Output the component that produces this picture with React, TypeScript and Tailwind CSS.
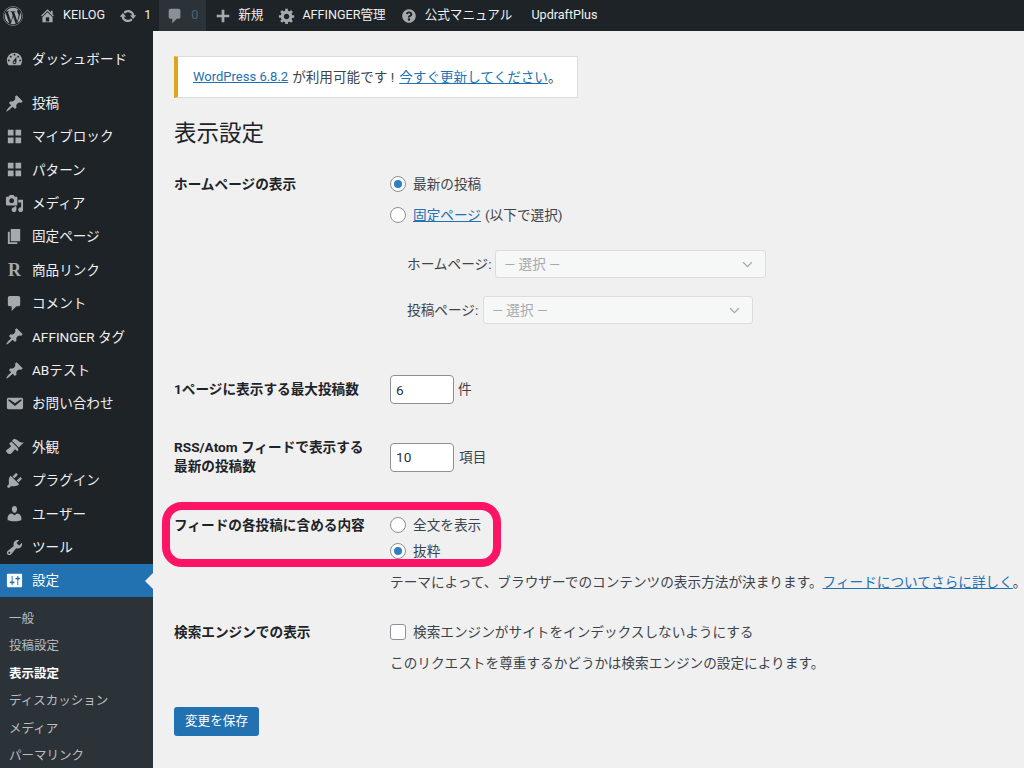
import { ReactNode } from "react";
import { FaWordpress, FaQuestionCircle } from "react-icons/fa";

const P = ({ d, className = "" }: { d: string; className?: string }) => (
  <svg viewBox="0 0 20 20" fill="currentColor" className={className}>
    <path d={d} />
  </svg>
);

const icons: Record<string, string> = {
  dashboard:
    "M3.76 16h12.48c1.1-1.37 1.76-3.11 1.76-5 0-4.42-3.58-8-8-8s-8 3.58-8 8c0 1.89.66 3.63 1.76 5zM10 4c.55 0 1 .45 1 1s-.45 1-1 1-1-.45-1-1 .45-1 1-1zM6 6c.55 0 1 .45 1 1s-.45 1-1 1-1-.45-1-1 .45-1 1-1zm8 0c.55 0 1 .45 1 1s-.45 1-1 1-1-.45-1-1 .45-1 1-1zm-5.37 5.55L12 7v6c0 1.1-.9 2-2 2s-2-.9-2-2c0-.57.24-1.08.63-1.45zM4 10c.55 0 1 .45 1 1s-.45 1-1 1-1-.45-1-1 .45-1 1-1zm12 0c.55 0 1 .45 1 1s-.45 1-1 1-1-.45-1-1 .45-1 1-1zm-5 3c0-.55-.45-1-1-1s-1 .45-1 1 .45 1 1 1 1-.45 1-1z",
  pin: "M10.44 3.02l1.82-1.82 6.36 6.35-1.83 1.82c-1.05-.68-2.48-.57-3.41.36l-.75.75c-.92.93-1.04 2.35-.35 3.41l-1.83 1.82-2.41-2.41-2.8 2.79c-.42.42-3.38 2.71-3.8 2.29s1.86-3.39 2.28-3.81l2.79-2.79L4.1 9.36l1.83-1.82c1.05.69 2.48.57 3.4-.36l.75-.75c.93-.92 1.05-2.35.36-3.41z",
  grid: "M3 3h6v6H3zM11 3h6v6h-6zM3 11h6v6H3zM11 11h6v6h-6z",
  media:
    "M13 11V4c0-.55-.45-1-1-1h-1.67L9 1H5L3.67 3H2c-.55 0-1 .45-1 1v7c0 .55.45 1 1 1h10c.55 0 1-.45 1-1zM7 4.5c1.38 0 2.5 1.12 2.5 2.5S8.38 9.5 7 9.5 4.5 8.38 4.5 7 5.62 4.5 7 4.5zM14 6h5v10.5c0 1.38-1.12 2.5-2.5 2.5S14 17.88 14 16.5s1.12-2.5 2.5-2.5c.17 0 .34.02.5.05V9h-3V6zm-4 8.05V13h2v3.5c0 1.38-1.12 2.5-2.5 2.5S7 17.88 7 16.5 8.12 14 9.5 14c.17 0 .34.02.5.05z",
  page: "M6 15V2h10v13H6zm-1 1h8v2H3V5h2v11z",
  comment:
    "M5 2h9c1.1 0 2 .9 2 2v7c0 1.1-.9 2-2 2h-2l-5 5v-5H5c-1.1 0-2-.9-2-2V4c0-1.1.9-2 2-2z",
  mail: "M3.87 4h13.25C18.37 4 19 4.59 19 5.79v8.42c0 1.19-.63 1.79-1.88 1.79H3.87c-1.25 0-1.88-.6-1.88-1.79V5.79c0-1.2.63-1.79 1.88-1.79zm6.62 8.6l6.74-5.53c.24-.2.43-.66.13-1.07-.29-.41-.82-.42-1.17-.17l-5.7 3.86L4.8 5.83c-.35-.25-.88-.24-1.17.17-.3.41-.11.87.13 1.07z",
  brush:
    "M14.48 11.06L7.41 3.99l1.5-1.5c.5-.56 2.3-.47 3.51.32 1.21.8 1.43 1.28 2.91 2.1 1.18.64 2.45 1.26 4.45.85zm-.71.71L6.7 4.7 4.93 6.47c-.39.39-.39 1.02 0 1.41l1.06 1.06c.39.39.39 1.03 0 1.42-.6.6-1.43 1.11-2.21 1.69-.35.26-.7.53-1.01.84C1.43 13.23.4 14.89 2.4 16.89s3.66.97 5.03-.23c.31-.31.58-.66.84-1.01.58-.78 1.09-1.61 1.69-2.21.39-.39 1.03-.39 1.42 0l1.06 1.06c.39.39 1.02.39 1.41 0z",
  plug: "M13.11 4.36L9.87 7.6 8 5.73l3.24-3.24c.35-.34 1.05-.2 1.56.32.52.51.66 1.21.31 1.55zm-8 1.77l.91-1.12 9.01 9.01-1.19.84c-.71.71-2.63 1.16-3.82 1.16H6.14L4.9 17.26c-.59.59-1.54.59-2.12 0-.59-.58-.59-1.53 0-2.12l1.24-1.24v-3.88c0-1.13.4-3.19 1.09-3.89zm7.26 3.97l3.24-3.24c.34-.35 1.04-.21 1.55.31.52.51.66 1.21.31 1.55l-3.24 3.25z",
  user: "M10 9.25c-2.27 0-2.73-3.44-2.73-3.44C7 4.02 7.82 2 9.97 2c2.16 0 2.98 2.02 2.71 3.81 0 0-.41 3.44-2.68 3.44zm0 2.57L12.72 10c2.39 0 4.52 2.33 4.52 4.53v2.49s-3.65 1.13-7.24 1.13c-3.65 0-7.24-1.13-7.24-1.13v-2.49c0-2.25 1.94-4.48 4.47-4.48z",
  wrench:
    "M16.68 9.77c-1.34 1.34-3.3 1.67-4.95.99l-5.41 6.52c-.99.99-2.59.99-3.58 0s-.99-2.59 0-3.57l6.52-5.42c-.68-1.65-.35-3.61.99-4.95 1.28-1.28 3.12-1.62 4.72-1.06l-2.89 2.89 2.82 2.82 2.86-2.87c.53 1.58.18 3.39-1.08 4.65zM3.81 16.21c.4.39 1.04.39 1.43 0 .4-.4.4-1.04 0-1.43-.39-.4-1.03-.4-1.43 0-.39.39-.39 1.03 0 1.43z",
  settings:
    "M18 16V4c0-.55-.45-1-1-1H3c-.55 0-1 .45-1 1v12c0 .55.45 1 1 1h14c.55 0 1-.45 1-1zM8 11h1c.55 0 1 .45 1 1s-.45 1-1 1H8v1.5c0 .28-.22.5-.5.5s-.5-.22-.5-.5V13H6c-.55 0-1-.45-1-1s.45-1 1-1h1V5.5c0-.28.22-.5.5-.5s.5.22.5.5V11zm5-2h-1c-.55 0-1-.45-1-1s.45-1 1-1h1V5.5c0-.28.22-.5.5-.5s.5.22.5.5V7h1c.55 0 1 .45 1 1s-.45 1-1 1h-1v5.5c0 .28-.22.5-.5.5s-.5-.22-.5-.5V9z",
  home: "M16 8.5l1.53 1.53-1.06 1.06L10 4.62l-6.47 6.47-1.06-1.06L10 2.5l4 4v-2h2v4zm-6-2.46l6 5.99V18H4v-5.97zM12 17v-5H8v5h4z",
  update:
    "M10.2 3.28c3.53 0 6.43 2.61 6.92 6h2.08l-3.5 4-3.5-4h2.32c-.45-1.97-2.21-3.45-4.32-3.45-1.45 0-2.73.71-3.54 1.78L4.95 5.66C6.23 4.2 8.11 3.28 10.2 3.28zm-.4 13.44c-3.52 0-6.43-2.61-6.92-6H.8l3.5-4c1.17 1.33 2.33 2.67 3.5 4H5.48c.45 1.97 2.21 3.45 4.32 3.45 1.45 0 2.73-.71 3.54-1.78l1.71 1.95c-1.28 1.46-3.15 2.38-5.25 2.38z",
  plus: "M17 8.5v3h-5.5V17h-3v-5.5H3v-3h5.5V3h3v5.5z",
  gear: "M18 12h-2.18c-.17.7-.44 1.35-.81 1.93l1.54 1.54-2.1 2.1-1.54-1.54c-.58.36-1.23.63-1.91.79V19H8v-2.18c-.68-.16-1.33-.43-1.91-.79l-1.54 1.54-2.12-2.12 1.54-1.54c-.36-.58-.63-1.23-.79-1.91H1V9.03h2.17c.16-.7.44-1.35.8-1.94L2.43 5.55l2.1-2.1 1.54 1.54c.58-.37 1.24-.64 1.93-.81V2h3v2.18c.68.16 1.33.43 1.91.79l1.54-1.54 2.12 2.12-1.54 1.54c.36.59.64 1.24.8 1.94H18V12zm-8.5 1.5c1.66 0 3-1.34 3-3s-1.34-3-3-3-3 1.34-3 3 1.34 3 3 3z",
};

const MenuItem = ({ icon, label, active }: { icon: string; label: string; active?: boolean }) => (
  <div className={`relative flex h-[33.4px] shrink-0 items-center pl-[5px] ${active ? "bg-[#2271b1] text-white" : "text-[#f0f0f1]"}`}>
    {icon === "R" ? (
      <span className="w-[19px] text-center font-['Liberation_Serif',serif] text-[18px] font-bold text-[#a7aaad]">R</span>
    ) : (
      <P d={icons[icon]} className={`h-[19px] w-[19px] ${active ? "text-white" : "text-[#a7aaad]"}`} />
    )}
    <span className="ml-2 text-[13.6px]">{label}</span>
    {active && (
      <span className="absolute right-0 top-[9px] h-0 w-0 border-y-[8px] border-r-[8px] border-y-transparent border-r-[#f0f0f1]" />
    )}
  </div>
);

const Sidebar = () => (
  <aside className="flex w-[153px] shrink-0 flex-col overflow-hidden bg-[#1d2327] pt-[11.4px]">
    <MenuItem icon="dashboard" label="ダッシュボード" />
    <div className="h-[10.6px] shrink-0" />
    <MenuItem icon="pin" label="投稿" />
    <MenuItem icon="grid" label="マイブロック" />
    <MenuItem icon="grid" label="パターン" />
    <MenuItem icon="media" label="メディア" />
    <MenuItem icon="page" label="固定ページ" />
    <MenuItem icon="R" label="商品リンク" />
    <MenuItem icon="comment" label="コメント" />
    <MenuItem icon="pin" label="AFFINGER タグ" />
    <MenuItem icon="pin" label="ABテスト" />
    <MenuItem icon="mail" label="お問い合わせ" />
    <div className="h-[10px] shrink-0" />
    <MenuItem icon="brush" label="外観" />
    <MenuItem icon="plug" label="プラグイン" />
    <MenuItem icon="user" label="ユーザー" />
    <MenuItem icon="wrench" label="ツール" />
    <MenuItem icon="settings" label="設定" active />
    <div className="flex flex-1 flex-col bg-[#2c3338] pl-[9px] pt-[8.5px] text-[12.5px] text-[#b9bcc0]">
      <div className="flex h-[27.4px] shrink-0 items-center">一般</div>
      <div className="flex h-[27.4px] shrink-0 items-center">投稿設定</div>
      <div className="flex h-[27.4px] shrink-0 items-center font-bold text-white">表示設定</div>
      <div className="flex h-[27.4px] shrink-0 items-center">ディスカッション</div>
      <div className="flex h-[27.4px] shrink-0 items-center">メディア</div>
      <div className="flex h-[27.4px] shrink-0 items-center">パーマリンク</div>
    </div>
  </aside>
);

const TopBar = () => (
  <header className="flex h-[31px] shrink-0 items-center bg-[#1d2327] text-[12.6px] text-[#f0f0f1]">
    <FaWordpress className="ml-[3px] h-[20px] w-[20px] text-[#a7aaad]" />
    <P d={icons.home} className="ml-[16px] h-[17px] w-[17px] text-[#a7aaad]" />
    <span className="ml-[7px]">KEILOG</span>
    <P d={icons.update} className="ml-[14px] h-[18px] w-[18px] text-[#a7aaad]" />
    <span className="ml-[7px]">1</span>
    <div className="ml-[8px] flex h-full w-[47px] items-center bg-[#2c3338] pl-[7px]">
      <P d={icons.comment} className="h-[18px] w-[18px] text-[#8c8f94]" />
      <span className="ml-[7px] text-[#50626f]">0</span>
    </div>
    <P d={icons.plus} className="ml-[8px] h-[18px] w-[18px] text-[#a7aaad]" />
    <span className="ml-[6px]">新規</span>
    <P d={icons.gear} className="ml-[15px] h-[18px] w-[18px] text-[#a7aaad]" />
    <span className="ml-[6px]">AFFINGER管理</span>
    <FaQuestionCircle className="ml-[16px] h-[14px] w-[14px] text-[#a7aaad]" />
    <span className="ml-[9px]">公式マニュアル</span>
    <span className="ml-[19px]">UpdraftPlus</span>
  </header>
);

const Radio = ({ on }: { on?: boolean }) => (
  <span className="mr-[7px] flex h-[16px] w-[16px] shrink-0 items-center justify-center rounded-full border border-[#8c8f94] bg-white">
    {on && <span className="h-[8px] w-[8px] rounded-full bg-[#2f7fc1]" />}
  </span>
);

const Line = ({ children, className = "" }: { children: ReactNode; className?: string }) => (
  <div className={`flex h-[28px] items-center ${className}`}>{children}</div>
);

const Label = ({ children }: { children: ReactNode }) => (
  <div className="w-[216px] shrink-0 font-bold leading-[19px] text-[#1d2327]">{children}</div>
);

const FakeSelect = ({ className }: { className: string }) => (
  <div className={`flex h-[28px] items-center justify-between rounded-[3px] border border-[#dcdcde] bg-[#f6f7f7] pl-[8px] pr-[12px] text-[#a7aaad] ${className}`}>
    <span>— 選択 —</span>
    <svg viewBox="0 0 12 8" className="h-[7px] w-[11px]" fill="none" stroke="#a7aaad" strokeWidth="1.5">
      <path d="M1 1.5l5 5 5-5" />
    </svg>
  </div>
);

const NumberField = ({ value }: { value: string }) => (
  <input
    readOnly
    value={value}
    className="h-[29px] w-[64px] rounded-[4px] border border-[#8c8f94] bg-white px-[5px] text-[13.6px] text-[#2c3338] outline-none"
  />
);

const App = () => {
  return (
    <div className="flex h-[768px] w-[1024px] flex-col overflow-hidden bg-[#f0f0f1] font-['Roboto','Noto_Sans_CJK_JP',sans-serif] text-[13.65px] text-[#3c434a]">
      <TopBar />
      <div className="flex min-h-0 flex-1">
        <Sidebar />
        <main className="min-w-0 flex-1 overflow-hidden pl-[21px] pt-[25px]">
          <div className="flex h-[42px] w-[404px] items-center border border-l-4 border-[#dcdcde] border-l-[#dba617] bg-white pl-[15px] text-[13.6px]">
            <a className="text-[13px] text-[#2271b1] underline">WordPress 6.8.2</a>
            <span className="ml-[4px]">が利用可能です !</span>
            <a className="ml-[5px] text-[#2271b1] underline">今すぐ更新してください</a>
            <span>。</span>
          </div>
          <h1 className="mt-[16px] flex h-[40px] items-center text-[22.5px] font-normal text-[#1d2327]">表示設定</h1>

          <div className="mt-[16px] flex">
            <div className="w-[216px] shrink-0">
              <Line>
                <Label>ホームページの表示</Label>
              </Line>
            </div>
            <div>
              <Line>
                <Radio on />
                最新の投稿
              </Line>
              <Line className="mt-[3px]">
                <Radio />
                <a className="text-[#2271b1] underline">固定ページ</a>
                <span className="ml-[4px]">(以下で選択)</span>
              </Line>
              <Line className="ml-[17px] mt-[21px]">
                <span>ホームページ:</span>
                <FakeSelect className="ml-[4px] w-[271px]" />
              </Line>
              <Line className="ml-[17px] mt-[18px]">
                <span>投稿ページ:</span>
                <FakeSelect className="ml-[5px] w-[270px]" />
              </Line>
            </div>
          </div>

          <div className="mt-[51px] flex items-center">
            <Label>1ページに表示する最大投稿数</Label>
            <NumberField value="6" />
            <span className="ml-[4px]">件</span>
          </div>

          <div className="mt-[34px] flex items-center">
            <Label>
              RSS/Atom フィードで表示する
              <br />
              最新の投稿数
            </Label>
            <NumberField value="10" />
            <span className="ml-[5px]">項目</span>
          </div>

          <div className="relative mt-[35px] flex">
            <div className="pointer-events-none absolute left-[-12px] top-[-9px] h-[65px] w-[339px] rounded-[20px] border-[8px] border-[#fd1464]" />
            <div className="flex h-[28px] items-center">
              <Label>フィードの各投稿に含める内容</Label>
            </div>
            <div>
              <Line>
                <Radio />
                全文を表示
              </Line>
              <Line className="-mt-[2px]">
                <Radio on />
                抜粋
              </Line>
            </div>
          </div>
          <div className="ml-[216px] mt-[7px] flex h-[20px] items-center whitespace-nowrap">
            <span>テーマによって、ブラウザーでのコンテンツの表示方法が決まります。</span>
            <a className="text-[#2271b1] underline">フィードについてさらに詳しく</a>
            <span>。</span>
          </div>

          <div className="mt-[26px] flex h-[28px] items-center">
            <Label>検索エンジンでの表示</Label>
            <span className="mr-[7px] h-[16px] w-[16px] shrink-0 rounded-[3px] border border-[#8c8f94] bg-white" />
            検索エンジンがサイトをインデックスしないようにする
          </div>
          <div className="ml-[216px] mt-[7px] flex h-[20px] items-center">
            このリクエストを尊重するかどうかは検索エンジンの設定によります。
          </div>

          <button className="mt-[34px] h-[29px] w-[85px] rounded-[3px] bg-[#2271b1] text-[12.6px] text-white">
            変更を保存
          </button>
        </main>
      </div>
    </div>
  );
};

export default App;
